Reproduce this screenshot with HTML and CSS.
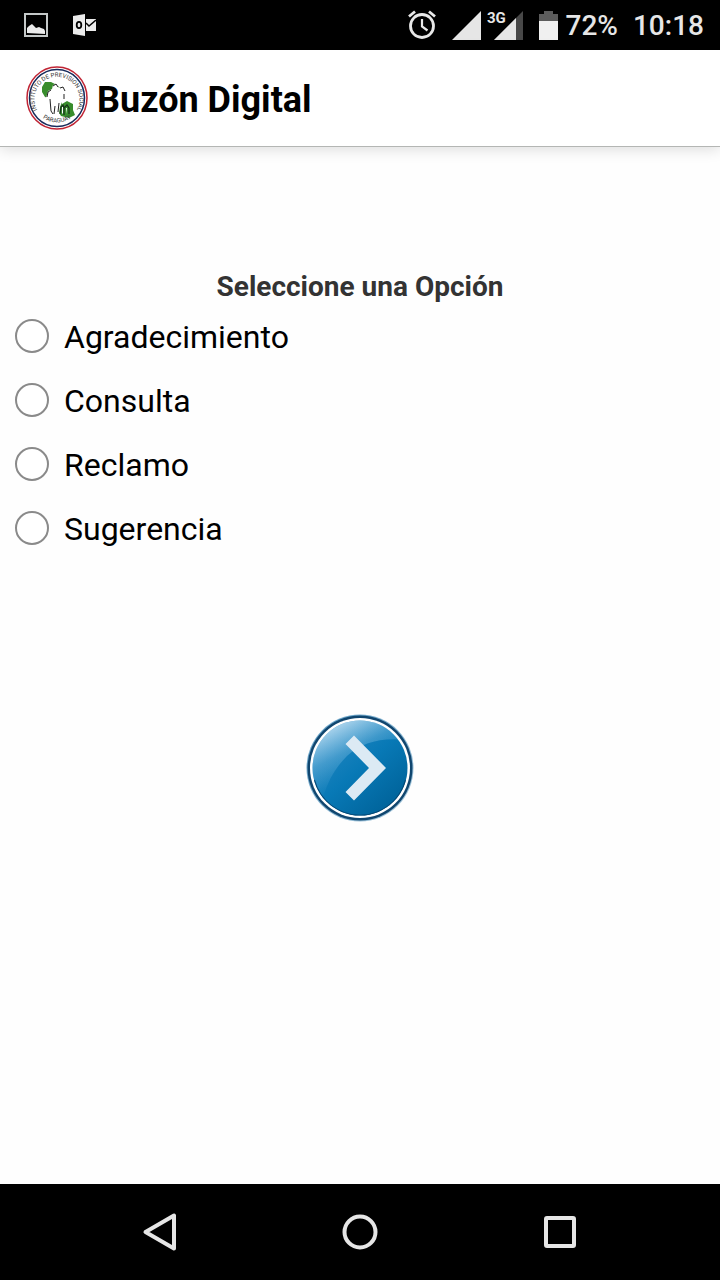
FILE: index.html
```html
<!DOCTYPE html>
<html lang="es">
<head>
<meta charset="utf-8">
<meta name="viewport" content="width=device-width, initial-scale=1">
<title>Buzón Digital</title>
<link rel="stylesheet" href="styles.css">
</head>
<body>
<div class="status-bar">
  <div class="notifications">
    <svg width="24" height="24" viewBox="0 0 24 24" aria-hidden="true">
      <rect x="1" y="1" width="22" height="22" fill="none" stroke="#c4c8c8" stroke-width="2"/>
      <path d="M3 20v-5l2-2 3-2 4 4 3-1 2 1 3 1 1 2v3z" fill="#ebebeb"/>
    </svg>
    <svg width="24" height="24" viewBox="0 0 24 24" aria-hidden="true">
      <path d="M14 6h10v12H14z" fill="#ebebeb"/>
      <path d="M1 3l12-2v22L1 21z" fill="#ebebeb"/>
      <path d="M14 10l3 3 7-6" fill="none" stroke="#000" stroke-width="1.5"/>
      <ellipse cx="7" cy="12" rx="2.3" ry="3.2" fill="none" stroke="#000" stroke-width="1.8"/>
    </svg>
  </div>
  <div class="system">
    <svg class="alarm" width="28" height="30" viewBox="0 0 28 30" aria-hidden="true">
      <g fill="none" stroke="#e8e8e8">
        <circle cx="14" cy="16" r="11.5" stroke-width="2.8"/>
        <path d="M14 9v7.5l5.5 4" stroke-width="2.2"/>
        <path d="M1 6.5l6-5M21 1.5l6 5" stroke-width="2.8"/>
      </g>
    </svg>
    <svg class="signal" width="29" height="30" viewBox="0 0 29 30" aria-hidden="true">
      <path d="M29 1v29H0z" fill="#e6e6e6"/>
    </svg>
    <svg class="signal-3g" width="36" height="30" viewBox="0 0 36 30" role="img" aria-label="Señal 3G">
      <path d="M36 1v29H7z" fill="#484848"/>
      <path d="M29 8v22H7z" fill="#e6e6e6"/>
      <path d="M0 0h19v13H17l-5 5H0z" fill="#000"/>
      <text class="network" x="0" y="13">3G</text>
    </svg>
    <svg class="battery" width="19" height="29" viewBox="0 0 19 29" aria-hidden="true">
      <path d="M5 0h9v3h5v8H0V3h5z" fill="#5c5c5c"/>
      <path d="M0 10h19v19H0z" fill="#f0f0f0"/>
    </svg>
    <span class="percent">72%</span>
    <time>10:18</time>
  </div>
</div>

<header class="app-bar">
  <svg class="logo" width="62" height="64" viewBox="0 0 62 64" aria-hidden="true">
    <defs>
      <path id="seal-top" d="M14 48A22.500 22.500 0 1 1 48 48"/>
      <path id="seal-bottom" d="M13 49A25.500 25.500 0 0 0 49 49"/>
    </defs>
    <ellipse cx="31" cy="32" rx="30" ry="31" fill="#fff" stroke="#c02434" stroke-width="1.5"/>
    <ellipse cx="31" cy="32" rx="27.5" ry="28.5" fill="#fff" stroke="#182c5c" stroke-width="1.5"/>
    <path d="M16 21l3-5 6 0 6 3 4 4 1 8 0 7 5-3 6 3 0 6 2 5-6 3-8-2-3-5-7-12-6-2-3-5z" fill="#388c2c"/>
    <path d="M20 32l2-7 4-2 1-4 4-1 2 4 4-2 3 4-1 5 1 6-4 1-2 5-1 7-3 1-2-7-2 7-3-1 0-9-2-1-1-4z" fill="#fff"/>
    <path d="M21 31l1-5 3-2M27 20l3-2 2 3M34 22l3-1 2 4M24 33l1 12 2 3M29 40l-1 8M33 37l-1 9M38 28l0 5" fill="none" stroke="#222" stroke-width="1"/>
    <path d="M34 48l1-7 2-2 1 3 3-3 2 3 0 6M38 42l0 7" fill="none" stroke="#16301a" stroke-width="1.2"/>
    <path d="M36 41l1 0 0 6-1 1zM40 42l1 0 0 6z" fill="#fff"/>
    <text class="seal-text"><textPath href="#seal-top" startOffset="50%" text-anchor="middle">INSTITUTO DE PREVISION SOCIAL</textPath></text>
    <text class="seal-text"><textPath href="#seal-bottom" startOffset="50%" text-anchor="middle">PARAGUAY</textPath></text>
  </svg>
  <h1>Buzón Digital</h1>
</header>

<main>
  <form class="mailbox">
    <fieldset>
      <legend>Seleccione una Opción</legend>
      <label class="option"><input type="radio" name="tipo" value="agradecimiento"><span>Agradecimiento</span></label>
      <label class="option"><input type="radio" name="tipo" value="consulta"><span>Consulta</span></label>
      <label class="option"><input type="radio" name="tipo" value="reclamo"><span>Reclamo</span></label>
      <label class="option"><input type="radio" name="tipo" value="sugerencia"><span>Sugerencia</span></label>
    </fieldset>
    <button class="next" type="button" aria-label="Siguiente">
      <svg width="108" height="108" viewBox="0 0 108 108" aria-hidden="true">
        <defs>
          <linearGradient id="halo" x1="0" y1="0" x2="1" y2="1">
            <stop offset="0" stop-color="#5c9cc4"/>
            <stop offset="1" stop-color="#a8c8dc"/>
          </linearGradient>
          <linearGradient id="face" x1="0.15" y1="0.1" x2="0.85" y2="0.9">
            <stop offset="0" stop-color="#2688c2"/>
            <stop offset="0.5" stop-color="#0879b6"/>
            <stop offset="1" stop-color="#00639a"/>
          </linearGradient>
          <linearGradient id="gloss" gradientUnits="userSpaceOnUse" x1="26" y1="10" x2="54" y2="66">
            <stop offset="0" stop-color="#e8f6ff" stop-opacity="0.75"/>
            <stop offset="0.5" stop-color="#b4def6" stop-opacity="0.28"/>
            <stop offset="1" stop-color="#90cef0" stop-opacity="0"/>
          </linearGradient>
          <clipPath id="disc"><circle cx="54" cy="54" r="47.5"/></clipPath>
        </defs>
        <circle cx="54" cy="54" r="53.5" fill="url(#halo)"/>
        <circle cx="54" cy="54" r="52.5" fill="#10466f"/>
        <circle cx="54" cy="54" r="50" fill="#fff"/>
        <circle cx="54" cy="54" r="47.5" fill="url(#face)"/>
        <g clip-path="url(#disc)">
          <path d="M0 0H108V27C78 22 56 28 41 42C30 53 22 66 17 84H0z" fill="url(#gloss)"/>
          <path d="M8 66A47.500 47.500 0 0 0 100 66" fill="none" stroke="#064571" stroke-width="2"/>
        </g>
        <path d="M48 21.500L80 54 48 86.500 39.500 78 63 54 39.500 30z" fill="#dceaf4"/>
      </svg>
    </button>
  </form>
</main>

<nav class="nav-bar" aria-label="Navegación del sistema">
  <button type="button" aria-label="Atrás">
    <svg width="40" height="40" viewBox="0 0 40 40" aria-hidden="true"><path d="M34 3.500v33L5.500 20z"/></svg>
  </button>
  <button type="button" aria-label="Inicio">
    <svg width="40" height="40" viewBox="0 0 40 40" aria-hidden="true"><circle cx="20" cy="20" r="15.500"/></svg>
  </button>
  <button type="button" aria-label="Recientes">
    <svg width="40" height="40" viewBox="0 0 40 40" aria-hidden="true"><rect x="6" y="6" width="28" height="28" rx="1"/></svg>
  </button>
</nav>
</body>
</html>
```

FILE: styles.css
```css
* {
  box-sizing: border-box;
}

body {
  display: flex;
  flex-direction: column;
  min-height: 100vh;
  margin: 0;
  background: #fefefe;
  color: #000;
  font-family: Roboto, "Liberation Sans", sans-serif;
}

svg {
  display: block;
  flex: none;
}

button {
  padding: 0;
  border: 0;
  background: none;
  cursor: pointer;
}

.status-bar {
  display: flex;
  align-items: center;
  justify-content: space-between;
  height: 50px;
  padding: 0 16px 0 24px;
  background: #000;
  color: #e6e6e6;
}

.notifications {
  display: flex;
  gap: 24px;
}

.system {
  display: flex;
  align-items: center;
  font-size: 28px;
  font-weight: 500;
  line-height: 50px;
}

.percent,
.system time {
  padding-top: 2px;
}

.battery {
  margin-right: 8px;
}

.alarm,
.signal-3g {
  margin-right: 16px;
}

.signal {
  margin-right: 6px;
}

.percent {
  margin-right: 15px;
}

.network {
  fill: #e6e6e6;
  font-size: 15px;
  font-weight: 700;
}

.app-bar {
  display: flex;
  align-items: center;
  gap: 9px;
  height: 97px;
  padding: 0 26px;
  border-bottom: 1px solid #b4b6b4;
  background: #fff;
  box-shadow: 0 2px 14px rgba(0, 0, 0, 0.14);
}

.app-bar h1 {
  margin: 0;
  padding-top: 4px;
  font-size: 36px;
  font-weight: 700;
  line-height: 44px;
}

.seal-text {
  fill: #333;
  font-size: 6px;
  font-weight: 400;
}

main {
  flex: 1;
  padding-top: 123px;
}

.mailbox {
  display: flex;
  flex-direction: column;
  align-items: center;
}

fieldset {
  width: 100%;
  min-width: 0;
  margin: 0;
  padding: 0;
  border: 0;
}

legend {
  width: 100%;
  padding: 0;
  color: #333;
  font-size: 28px;
  font-weight: 700;
  line-height: 34px;
  text-align: center;
}

.option {
  display: flex;
  align-items: center;
  gap: 15px;
  height: 64px;
  padding: 0 15px;
  font-size: 32px;
  line-height: 40px;
}

.option span {
  padding-top: 1px;
}

.option input {
  flex: none;
  width: 34px;
  height: 34px;
  margin: 0;
  border: 2px solid #8a8a8a;
  border-radius: 50%;
  appearance: none;
  background: #fff;
}

.option input:checked {
  background: #0879b6;
  box-shadow: inset 0 0 0 6px #fff;
}

.next {
  margin-top: 154px;
  border-radius: 50%;
}

.nav-bar {
  display: grid;
  grid-template-columns: repeat(3, 1fr);
  height: 96px;
  padding: 0 60px;
  background: #000;
}

.nav-bar button {
  display: grid;
  place-items: center;
}

.nav-bar svg {
  fill: none;
  stroke: #e6e6e6;
  stroke-width: 4px;
  stroke-linejoin: round;
}
```
